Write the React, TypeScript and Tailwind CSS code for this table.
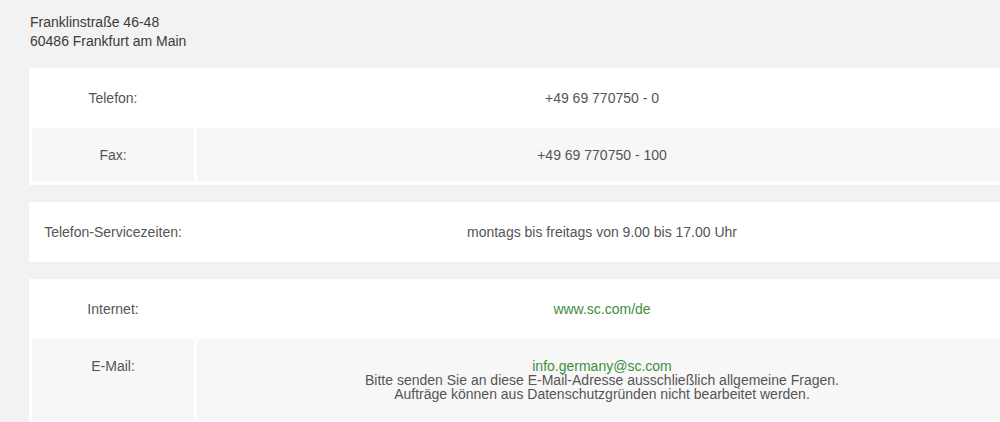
import React from 'react';

type Row = {
  label: string;
  value: React.ReactNode;
  top?: boolean;
};

const groups: Row[][] = [
  [
    { label: 'Telefon:', value: '+49 69 770750 - 0' },
    { label: 'Fax:', value: '+49 69 770750 - 100' },
  ],
  [{ label: 'Telefon-Servicezeiten:', value: 'montags bis freitags von 9.00 bis 17.00 Uhr' }],
  [
    { label: 'Internet:', value: <a className="text-[#3d8f3d]">www.sc.com/de</a> },
    {
      label: 'E-Mail:',
      top: true,
      value: (
        <>
          <a className="text-[#3d8f3d]">info.germany@sc.com</a>
          <br />
          Bitte senden Sie an diese E-Mail-Adresse ausschließlich allgemeine Fragen.
          <br />
          Aufträge können aus Datenschutzgründen nicht bearbeitet werden.
        </>
      ),
    },
  ],
];

function InfoTable({ rows }: { rows: Row[] }) {
  return (
    <table className="w-[981px] table-fixed border-separate border-spacing-[3px] bg-white">
      <colgroup>
        <col className="w-[162px]" />
        <col />
      </colgroup>
      <tbody>
        {rows.map((row, i) => {
          // every second row is shaded
          const bg = i % 2 === 1 ? 'bg-[#f7f7f7]' : 'bg-white';
          const align = row.top ? 'align-top' : 'align-middle';
          return (
            <tr key={i}>
              <td className={`${bg} ${align} h-[54px] py-[20px] text-center text-[#555] leading-[14px]`}>
                {row.label}
              </td>
              <td className={`${bg} ${align} h-[54px] py-[20px] text-center text-[#555] leading-[14px]`}>
                {row.value}
              </td>
            </tr>
          );
        })}
      </tbody>
    </table>
  );
}

export default function App() {
  return (
    <div className="min-h-[422px] w-full overflow-hidden bg-[#f2f2f2] font-['Liberation_Sans',Arial,sans-serif] text-[14px]">
      <div className="pl-[29px] pt-[13px]">
        <p className="pl-[1px] leading-[19px] text-[#3a3a3a]">
          Franklinstraße 46-48
          <br />
          60486 Frankfurt am Main
        </p>
        <div className="mt-[17px] flex flex-col gap-[17px]">
          {groups.map((rows, i) => (
            <InfoTable key={i} rows={rows} />
          ))}
        </div>
      </div>
    </div>
  );
}
